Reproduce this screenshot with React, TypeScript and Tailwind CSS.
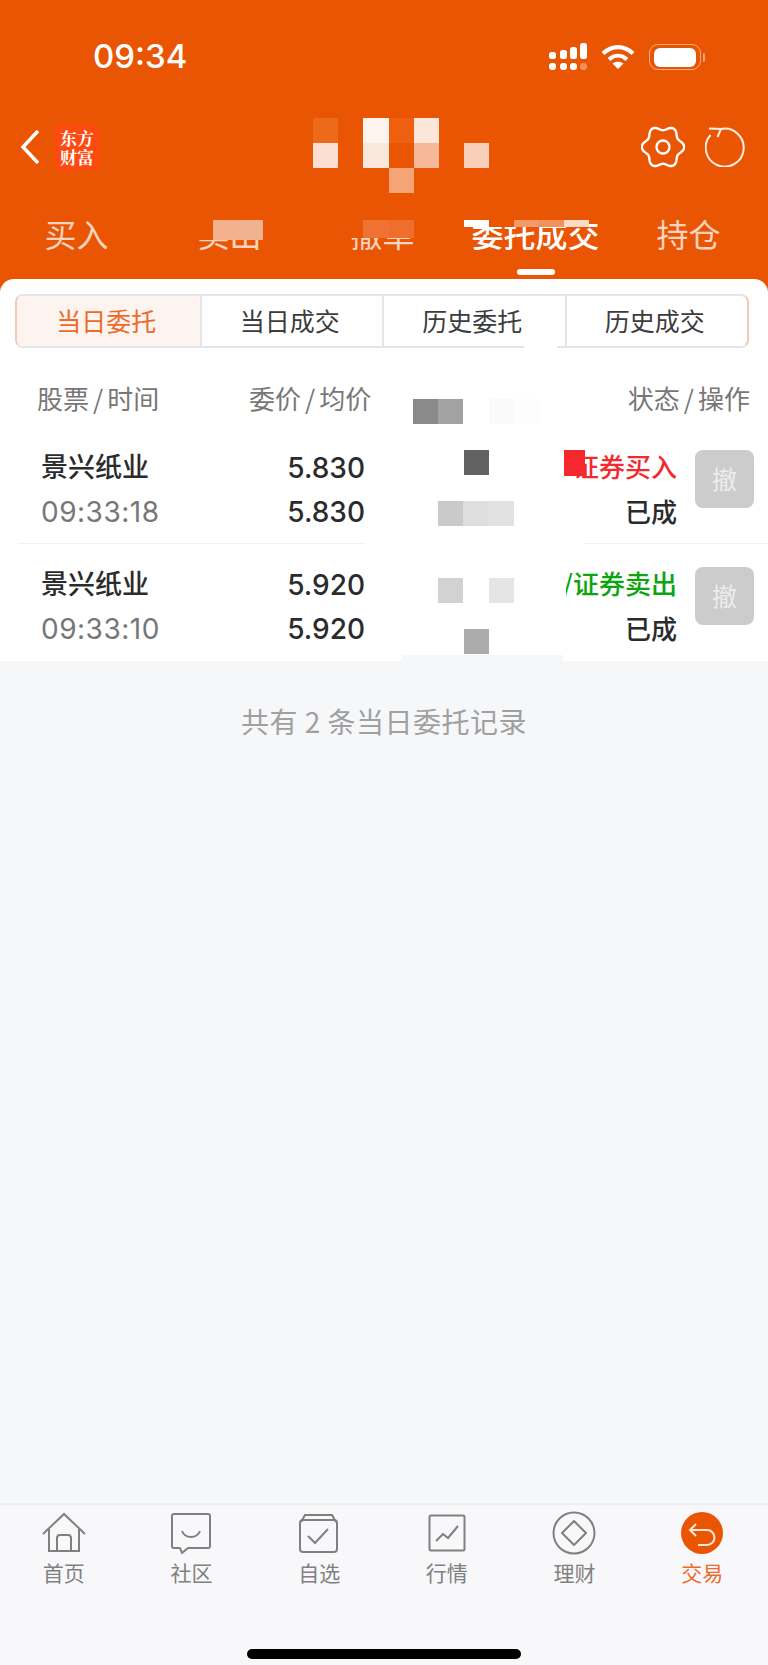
const font = { fontFamily: '"Noto Sans CJK SC", sans-serif' }

const tabs = ['买入', '卖出', '撤单', '委托成交', '持仓']
const segments = ['当日委托', '当日成交', '历史委托', '历史成交']

const orders = [
  { name: '景兴纸业', time: '09:33:18', price: '5.830', avg: '5.830', side: '证券买入', color: 'text-[#f5282e]' },
  { name: '景兴纸业', time: '09:33:10', price: '5.920', avg: '5.920', side: '/证券卖出', color: 'text-[#0aa50f]' },
]

// Censor blocks from the original picture
const mosaic = [
  'left-[313px] top-[118px] w-[25px] h-[25px] bg-[#ec6a1a]',
  'left-[313px] top-[143px] w-[25px] h-[25px] bg-[#fbdfd2]',
  'left-[363px] top-[118px] w-[26px] h-[25px] bg-[#fdf4ef]',
  'left-[363px] top-[143px] w-[26px] h-[25px] bg-[#fbe8dd]',
  'left-[389px] top-[118px] w-[25px] h-[25px] bg-[#ee5f10]',
  'left-[389px] top-[168px] w-[25px] h-[25px] bg-[#f6a376]',
  'left-[414px] top-[118px] w-[25px] h-[25px] bg-[#fce6da]',
  'left-[414px] top-[143px] w-[25px] h-[25px] bg-[#f6b899]',
  'left-[464px] top-[143px] w-[25px] h-[25px] bg-[#f8cfb8]',
  // tab row
  'left-[190px] top-[216px] w-[75px] h-[24px] bg-[#ea5504]',
  'left-[213px] top-[220px] w-[25px] h-[20px] bg-[#f2b08c]',
  'left-[238px] top-[220px] w-[25px] h-[20px] bg-[#f1b28f]',
  'left-[340px] top-[216px] w-[74px] h-[22px] bg-[#ea5504]',
  'left-[363px] top-[220px] w-[26px] h-[18px] bg-[#ee7232]',
  'left-[389px] top-[220px] w-[25px] h-[18px] bg-[#ee6e2b]',
  'left-[464px] top-[216px] w-[125px] h-[11px] bg-[#ea5504]',
  'left-[464px] top-[220px] w-[25px] h-[7px] bg-white',
  'left-[514px] top-[220px] w-[25px] h-[7px] bg-[#f29a6a]',
  'left-[539px] top-[220px] w-[25px] h-[7px] bg-[#f0915e]',
  'left-[564px] top-[220px] w-[25px] h-[7px] bg-[#fbdccb]',
  // table
  'left-[524px] top-[346px] w-[33px] h-[6px] bg-white',
  'left-[365px] top-[540px] w-[219px] h-[8px] bg-white',
  'left-[402px] top-[655px] w-[161px] h-[6px] bg-[#f6f7f9]',
  'left-[555px] top-[565px] w-[11px] h-[40px] bg-white',
  'left-[413px] top-[399px] w-[25px] h-[25px] bg-[#8a8a8a]',
  'left-[438px] top-[399px] w-[25px] h-[25px] bg-[#a2a2a2]',
  'left-[489px] top-[399px] w-[25px] h-[25px] bg-[#fafafa]',
  'left-[514px] top-[399px] w-[25px] h-[25px] bg-[#fdfdfd]',
  'left-[464px] top-[450px] w-[25px] h-[25px] bg-[#626262]',
  'left-[564px] top-[450px] w-[21px] h-[26px] bg-[#f5282e]',
  'left-[438px] top-[501px] w-[25px] h-[25px] bg-[#cacaca]',
  'left-[463px] top-[501px] w-[25px] h-[25px] bg-[#dedede]',
  'left-[488px] top-[501px] w-[26px] h-[25px] bg-[#e2e2e2]',
  'left-[438px] top-[578px] w-[25px] h-[25px] bg-[#d2d2d2]',
  'left-[489px] top-[578px] w-[25px] h-[25px] bg-[#e5e5e5]',
  'left-[464px] top-[629px] w-[25px] h-[25px] bg-[#acacac]',
]

function StatusIcons() {
  return (
    <div className="flex items-center">
      <svg width="38" height="28" viewBox="1 0 38 28" fill="#fff">
        <rect x="1" y="9" width="7" height="7" rx="2.5" />
        <rect x="1" y="20" width="7" height="7" rx="3" />
        <rect x="12" y="7" width="7" height="9" rx="2.5" />
        <rect x="12" y="20" width="7" height="7" rx="3" />
        <rect x="22" y="4" width="7" height="12" rx="2.5" />
        <rect x="22" y="20" width="7" height="7" rx="3" />
        <rect x="32" y="0" width="7" height="16" rx="2.5" />
        <rect x="32" y="20" width="7" height="7" rx="3" opacity="0.35" />
      </svg>
      <svg className="ml-[14px]" width="34" height="26" viewBox="0 0 34 26" fill="none" stroke="#fff" strokeWidth="4.2">
        <path d="M2 9.5C11 1 23 1 32 9.5" />
        <path d="M8 15.5C13.5 10.5 20.5 10.5 26 15.5" />
        <path d="M17 25l-5.5-5.5C14.5 17 19.5 17 22.5 19.5z" fill="#fff" stroke="none" />
      </svg>
      <div className="ml-[14px] flex h-[26px] w-[52px] items-center justify-center rounded-[9px] border-[1.5px] border-white/50">
        <div className="h-[19px] w-[42px] rounded-[6px] bg-white" />
      </div>
      <div className="ml-[2px] h-[9px] w-[2px] rounded-r-full bg-white/50" />
    </div>
  )
}

// six soft lobes round the centre
const gearPath =
  Array.from({ length: 121 }, (_, i) => {
    const a = (i / 120) * Math.PI * 2
    const r = 19 + 2.2 * Math.cos(6 * a)
    return `${i === 0 ? 'M' : 'L'}${(22 + r * Math.cos(a)).toFixed(2)} ${(21 + r * Math.sin(a)).toFixed(2)}`
  }).join('') + 'z'

function Gear() {
  return (
    <svg width="44" height="42" viewBox="0 0 44 42" fill="none" stroke="#fff" strokeWidth="2.4">
      <path d={gearPath} />
      <circle cx="22" cy="21" r="6.5" />
    </svg>
  )
}

function Refresh() {
  return (
    <svg width="40" height="40" viewBox="0 0 40 40" fill="none" stroke="#fff" strokeOpacity="0.9" strokeWidth="2">
      <path d="M16 2A19 19 0 1 1 5.500 8" />
      <path d="M4 1.500L16 2l-3.500 8" />
    </svg>
  )
}

const navItems = [
  {
    label: '首页',
    icon: (
      <svg width="44" height="42" viewBox="0 0 44 42" fill="none" stroke="#808080" strokeWidth="2">
        <path d="M1 22L22 2l21 20" />
        <path d="M7 17v22h30V17" />
        <path d="M15 39V26a3 3 0 0 1 3-3h8a3 3 0 0 1 3 3v13" />
      </svg>
    ),
  },
  {
    label: '社区',
    icon: (
      <svg width="42" height="42" viewBox="0 0 42 42" fill="none" stroke="#808080" strokeWidth="2">
        <path d="M4 2h34a2 2 0 0 1 2 2v30a2 2 0 0 1-2 2H18l-6 5-2-5H4a2 2 0 0 1-2-2V4a2 2 0 0 1 2-2z" strokeLinejoin="round" />
        <path d="M12 19c3 8 15 8 18 0" />
      </svg>
    ),
  },
  {
    label: '自选',
    icon: (
      <svg width="40" height="40" viewBox="0 0 40 40" fill="none" stroke="#808080" strokeWidth="2">
        <rect x="1" y="7" width="37" height="32" rx="3" />
        <path d="M2 9l4-7h27l4 7" />
        <path d="M9 23l7 7 13-14" />
      </svg>
    ),
  },
  {
    label: '行情',
    icon: (
      <svg width="38" height="38" viewBox="0 0 38 38" fill="none" stroke="#808080" strokeWidth="2">
        <rect x="1.500" y="1.500" width="35" height="35" rx="1.500" />
        <path d="M8 27l7-7 5 4 10-12" />
      </svg>
    ),
  },
  {
    label: '理财',
    icon: (
      <svg width="44" height="44" viewBox="0 0 44 44" fill="none" stroke="#808080" strokeWidth="2">
        <circle cx="22" cy="22" r="20.500" />
        <path d="M22 10L34 22 22 34 10 22z" strokeLinejoin="round" />
      </svg>
    ),
  },
  {
    label: '交易',
    active: true,
    icon: (
      <svg width="42" height="42" viewBox="0 0 42 42">
        <circle cx="21" cy="21" r="21" fill="#ea5504" />
        <path d="M15 12l-6 6 6 6M9 18h17a7.500 7.500 0 0 1 0 15H17" fill="none" stroke="#fff" strokeOpacity="0.85" strokeWidth="2" />
      </svg>
    ),
  },
]

function Slashed({ a, b }: { a: string; b: string }) {
  return (
    <>
      {a}
      <span className="mx-[4px]">/</span>
      {b}
    </>
  )
}

export default function App() {
  return (
    <div className="relative flex h-[1665px] w-[768px] flex-col overflow-hidden bg-[#f6f7f9]" style={font}>
      {/* Orange header */}
      <header className="h-[291px] shrink-0 bg-[#ea5504] text-white">
        <div className="flex h-[114px] items-center justify-between pl-[93px] pr-[63px]">
          <span className="font-['Inter'] text-[33px] font-medium">09:34</span>
          <StatusIcons />
        </div>
        <div className="flex h-[66px] items-center pl-[20px] pr-[23px]">
          <svg width="20" height="36" viewBox="0 0 20 36" fill="none" stroke="#fff" strokeWidth="3.500">
            <path d="M18 2L3 18l15 16" />
          </svg>
          <div className="ml-[14px] flex h-[46px] w-[46px] flex-col items-center justify-center rounded-[9px] bg-[#fc4a11] font-['Noto_Serif_CJK_SC','Noto_Sans_CJK_SC',serif] text-[17px] leading-[19px] font-bold">
            <span>东方</span>
            <span>财富</span>
          </div>
          <div className="ml-auto flex items-center gap-[20px]">
            <Gear />
            <Refresh />
          </div>
        </div>
        <nav className="grid w-[765px] grid-cols-5 pt-[33px]">
          {tabs.map((tab) => {
            const active = tab === '委托成交'
            return (
              <div key={tab} className="flex flex-col items-center">
                <span className={`text-[32px] leading-[40px] ${active ? 'font-medium text-white' : 'text-white/75'}`}>{tab}</span>
                {active && <div className="mt-[16px] h-[6px] w-[38px] rounded-full bg-white" />}
              </div>
            )
          })}
        </nav>
      </header>

      {/* Orders card */}
      <main className="-mt-[12px] h-[382px] shrink-0 rounded-t-[14px] bg-white pt-[15px]">
        <div className="ml-[15px] grid h-[54px] w-[734px] grid-cols-4 rounded-[8px] border-2 border-[#e2e5ea] border-x-[#f2c9b3]">
          {segments.map((segment, i) => (
            <div
              key={segment}
              className={`flex items-center justify-center pr-[4px] text-[25px] ${
                i === 0 ? 'rounded-l-[7px] bg-[#fdf3ef] text-[#ee6a2a]' : 'border-l-2 border-[#e2e5ea] text-[#3c3c3c]'
              }`}
            >
              {segment}
            </div>
          ))}
        </div>
        <div className="flex h-[79px] items-start pt-[32px] pl-[37px] pr-[18px] text-[26px] leading-[36px] text-[#777]">
          <span className="w-[212px]"><Slashed a="股票" b="时间" /></span>
          <span className="w-[122px] whitespace-nowrap text-right"><Slashed a="委价" b="均价" /></span>
          <span className="ml-auto"><Slashed a="状态" b="操作" /></span>
        </div>
        {orders.map((order, i) => (
          <div key={order.time} className={`ml-[18px] flex h-[117px] pl-[23px] pt-[19px] ${i === 0 ? 'border-b border-[#f2f2f2]' : ''}`}>
            <div className="w-[200px]">
              <div className="mb-[4px] text-[27px] leading-[40px] font-medium text-[#2b2b2b]">{order.name}</div>
              <div className="font-['Inter'] text-[28px] leading-[44px] tracking-[0.5px] text-[#777]">{order.time}</div>
            </div>
            <div className="w-[124px] text-right font-['Inter'] text-[28px] leading-[44px] font-medium text-[#2b2b2b]">
              <div>{order.price}</div>
              <div>{order.avg}</div>
            </div>
            <div className="ml-auto w-[120px] text-right">
              <div className={`text-[26px] leading-[40px] font-medium whitespace-nowrap ${order.color}`}>{order.side}</div>
              <div className="mt-[3px] text-[26px] leading-[44px] font-medium text-[#2b2b2b]">已成</div>
            </div>
            <button className="mt-[4px] mr-[14px] ml-[18px] h-[58px] w-[59px] rounded-[8px] bg-[#cccccc] text-[25px] text-[#ececec]">撤</button>
          </div>
        ))}
      </main>

      <p className="mt-[41px] text-center text-[28px] leading-[38px] tracking-[0.5px] text-[#a0a0a0]">共有 2 条当日委托记录</p>

      {/* Bottom navigation */}
      <footer className="mt-auto h-[162px] shrink-0 border-t-2 border-[#eeeef0] bg-[#f8f8fa]">
        <div className="grid w-[766px] grid-cols-6 pt-[4px]">
          {navItems.map((item) => (
            <div key={item.label} className="flex flex-col items-center">
              <div className="flex h-[48px] items-center justify-center">{item.icon}</div>
              <span className={`mt-[1px] text-[21px] leading-[28px] ${item.active ? 'text-[#ee6a2a]' : 'text-[#808080]'}`}>{item.label}</span>
            </div>
          ))}
        </div>
        <div className="mx-auto mt-[63px] h-[10px] w-[274px] rounded-full bg-black" />
      </footer>

      {mosaic.map((block) => (
        <div key={block} className={`absolute ${block}`} />
      ))}
    </div>
  )
}
